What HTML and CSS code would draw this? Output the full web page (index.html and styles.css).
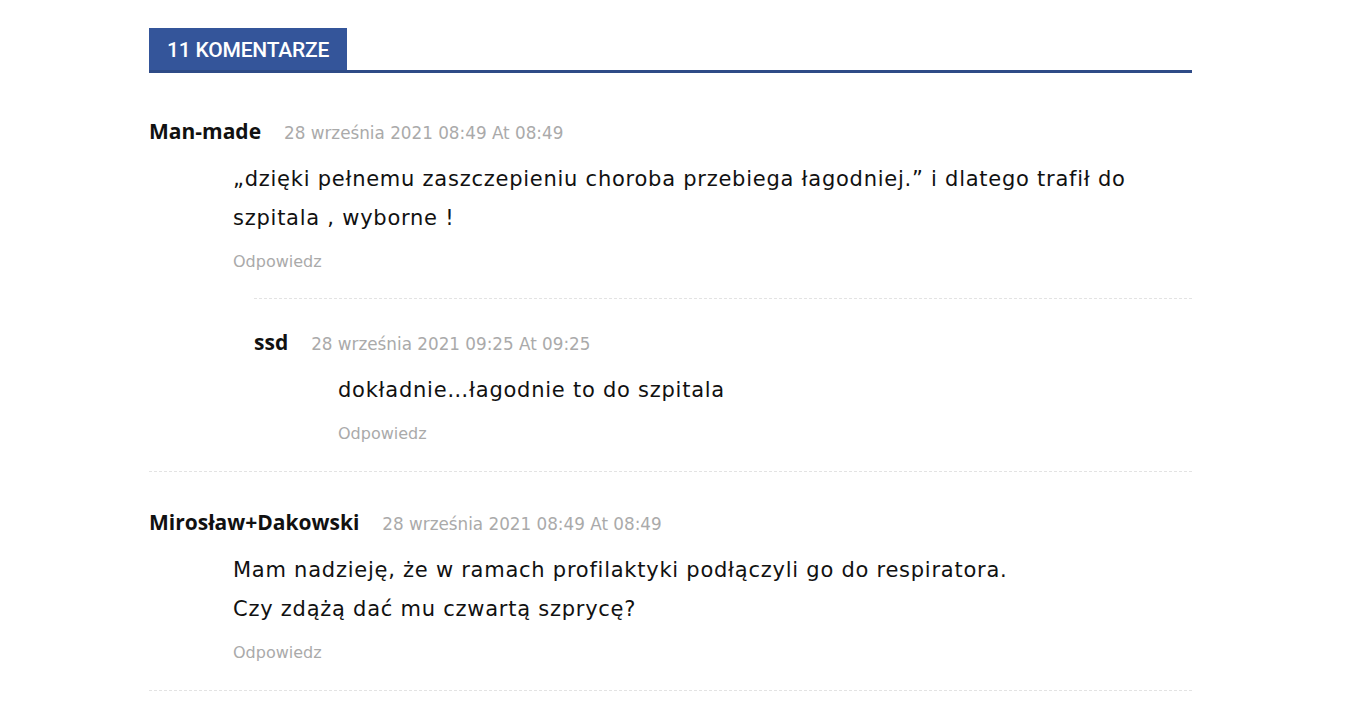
FILE: index.html
```html
<!DOCTYPE html>
<html lang="pl">

<head>
    <meta charset="UTF-8">
    <meta name="viewport" content="width=device-width, initial-scale=1.0">
    <title>Komentarze</title>
    <link rel="stylesheet" href="styles.css">
</head>

<body>
    <div class="comments">
        <div class="comments-title">
            <h3>11 KOMENTARZE</h3>
        </div>

        <ol class="comment-list">
            <li class="comment">
                <div class="comment-meta">
                    <span class="author">Man-made</span>
                    <span class="date">28 września 2021 08:49 At 08:49</span>
                </div>
                <div class="comment-content">
                    <p>„dzięki pełnemu zaszczepieniu choroba przebiega łagodniej.” i dlatego trafił do szpitala , wyborne !</p>
                    <a class="reply" href="#">Odpowiedz</a>
                </div>

                <ol class="children">
                    <li class="comment">
                        <div class="comment-meta">
                            <span class="author">ssd</span>
                            <span class="date">28 września 2021 09:25 At 09:25</span>
                        </div>
                        <div class="comment-content">
                            <p>dokładnie…łagodnie to do szpitala</p>
                            <a class="reply" href="#">Odpowiedz</a>
                        </div>
                    </li>
                </ol>
            </li>

            <li class="comment">
                <div class="comment-meta">
                    <span class="author">Mirosław+Dakowski</span>
                    <span class="date">28 września 2021 08:49 At 08:49</span>
                </div>
                <div class="comment-content">
                    <p>Mam nadzieję, że w ramach profilaktyki podłączyli go do respiratora.<br>
                    Czy zdążą dać mu czwartą szprycę?</p>
                    <a class="reply" href="#">Odpowiedz</a>
                </div>
            </li>
        </ol>
    </div>
</body>

</html>
```

FILE: styles.css
```css
body {
    font-family: "DejaVu Sans", Verdana, sans-serif;
    color: #111;
    margin: 0;
    padding: 0;
    background: #fff;
}

.comments {
    width: 1043px;
    margin-left: 149px;
    padding-top: 28px;
}

.comments-title {
    display: flex;
    border-bottom: 3px solid #2f4b87;
}

.comments-title h3 {
    margin: 0;
    height: 42px;
    line-height: 44px;
    padding: 0 18px;
    background-color: #34559a;
    color: #fff;
    font-family: Roboto, sans-serif;
    font-weight: 500;
    font-size: 21px;
    letter-spacing: -0.2px;
}

.comment-list, .children {
    list-style: none;
    margin: 0;
    padding: 0;
}

.comment-list {
    margin-top: 8px;
}

.comment {
    padding: 36px 0 25px;
    border-bottom: 1px dashed #e3e3e3;
}

.comment-meta {
    display: flex;
    align-items: baseline;
    gap: 23px;
    height: 28px;
    line-height: 28px;
}

.author {
    font-family: "Open Sans", sans-serif;
    font-weight: 700;
    font-size: 21px;
    color: #111;
}

.date {
    font-size: 16.8px;
    color: #aaa;
}

.comment-content {
    padding-left: 84px;
}

.comment-content p {
    margin: 15px 0 12px;
    font-size: 21px;
    line-height: 39px;
    letter-spacing: 0.75px;
}

.reply {
    display: block;
    font-size: 16px;
    line-height: 24px;
    color: #aaa;
    text-decoration: none;
}

.children {
    margin: 24px 0 0 105px;
    border-top: 1px dashed #e3e3e3;
}

.children .comment {
    padding: 29px 0 0;
    border-bottom: none;
}
```
